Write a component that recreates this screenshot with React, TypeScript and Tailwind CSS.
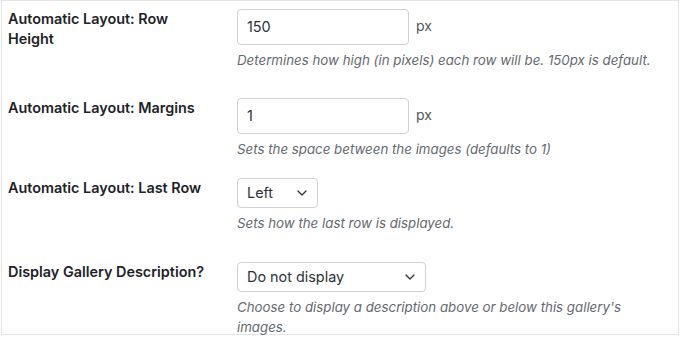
import React from "react";

function Chevron() {
  return (
    <svg width="10" height="6" viewBox="0 0 10 6" className="shrink-0">
      <polyline points="1,1 5,5 9,1" fill="none" stroke="#2c3338" strokeWidth="1.3" strokeLinecap="round" strokeLinejoin="round" />
    </svg>
  );
}

function Label({ children }: { children: React.ReactNode }) {
  return (
    <div className="w-[235px] shrink-0 pl-[6px]">
      <div className="w-[200px] text-[14.4px] leading-[20px] font-semibold text-[#1d2327]">{children}</div>
    </div>
  );
}

function Desc({ children, className = "" }: { children: React.ReactNode; className?: string }) {
  return <p className={"w-[425px] text-[13.3px] leading-[20px] italic text-[#646970] " + className}>{children}</p>;
}

function NumberRow({ label, value, desc, className = "" }: { label: string; value: string; desc: string; className?: string }) {
  return (
    <div className={"flex items-start " + className}>
      <Label>{label}</Label>
      <div className="flex flex-col">
        <div className="flex items-start">
          <div className="w-[172px] h-[36px] rounded-[4px] border border-[#cfd0d2] bg-white px-[9px] flex items-center text-[14.4px] text-[#2c3338]">
            {value}
          </div>
          <span className="ml-[7px] text-[14px] leading-[34px] text-[#50575e]">px</span>
        </div>
        <Desc className="mt-[5px]">{desc}</Desc>
      </div>
    </div>
  );
}

function SelectRow({ label, value, width, desc, className = "" }: { label: string; value: string; width: string; desc: string; className?: string }) {
  return (
    <div className={"flex items-start " + className}>
      <Label>{label}</Label>
      <div className="flex flex-col">
        <div className={"h-[30px] rounded-[4px] border border-[#cfd0d2] bg-white pl-[9px] pr-[10px] flex items-center justify-between text-[14.4px] text-[#2c3338] " + width}>
          <span>{value}</span>
          <Chevron />
        </div>
        <Desc className="mt-[5px]">{desc}</Desc>
      </div>
    </div>
  );
}

export default function App() {
  return (
    <div className="w-[680px] h-[340px] bg-white font-['Inter','Noto_Sans',sans-serif] overflow-hidden">
      <div className="ml-[1px] w-[678px] h-[335px] border border-[#e4e4e4] pt-[8px]">
        <NumberRow
          label="Automatic Layout: Row Height"
          value="150"
          desc="Determines how high (in pixels) each row will be. 150px is default."
        />
        <NumberRow
          className="mt-[28px]"
          label="Automatic Layout: Margins"
          value="1"
          desc="Sets the space between the images (defaults to 1)"
        />
        <SelectRow
          className="mt-[19px]"
          label="Automatic Layout: Last Row"
          value="Left"
          width="w-[81px]"
          desc="Sets how the last row is displayed."
        />
        <SelectRow
          className="mt-[29px]"
          label="Display Gallery Description?"
          value="Do not display"
          width="w-[189px]"
          desc="Choose to display a description above or below this gallery's images."
        />
      </div>
    </div>
  );
}
